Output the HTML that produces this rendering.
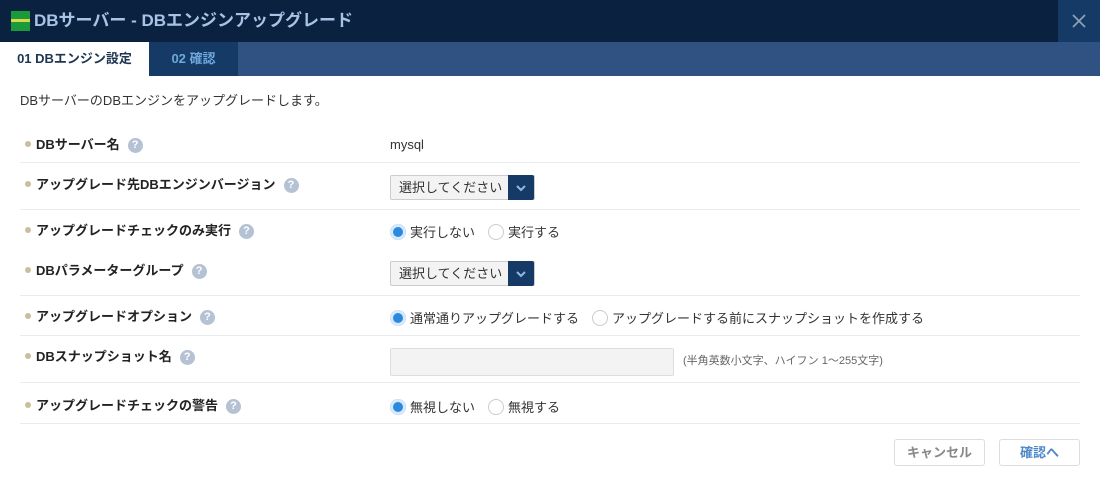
<!DOCTYPE html><html><head><meta charset="utf-8"><style>
body{margin:0;width:1100px;height:485px;background:#fff;font-family:"Liberation Sans","Noto Sans CJK JP",sans-serif;font-size:13px;line-height:1.2;color:#333;position:relative;overflow:hidden}
.a{position:absolute}
.hd{left:0;top:0;width:1100px;height:42px;background:#0a2240}
.ttl{left:34px;top:11px;color:#a9c3e6;font-size:17px;font-weight:bold}
.x{left:1058px;top:0;width:42px;height:42px;background:#163a66}
.tb{left:0;top:42px;width:1100px;height:34px;background:#305283}
.t1{left:0;top:42px;width:149px;height:34px;background:#fff;font-weight:bold;color:#1e3552;line-height:34px;text-align:center}
.t2{left:149px;top:42px;width:89px;height:34px;background:#163a66;font-weight:bold;color:#6fa8dc;line-height:34px;text-align:center}
.ln{left:20px;width:1060px;height:1px;background:#e8ecef}
.lb{left:25px;font-weight:bold;color:#222;margin-top:1px}
.lb:before{content:"";display:inline-block;width:6px;height:6px;border-radius:50%;background:#c9bf9a;margin-right:5px;vertical-align:2px}
.q{display:inline-block;width:15px;height:15px;border-radius:50%;background:#b4c2d4;color:#fff;font-size:11px;text-align:center;line-height:15px;margin-left:8px;vertical-align:1px}
.sel{left:390px;width:145px;height:25px;border:1px solid #ccc;border-radius:2px;background:#f3f3f3;box-sizing:border-box}
.sel span{position:absolute;left:8px;top:4px}
.sel i{position:absolute;right:0;top:-1px;width:26px;height:25px;background:#163a66;border-radius:0 2px 2px 0}
.v{margin-top:1px}
.r{display:inline-block;width:16px;height:16px;border-radius:50%;border:1px solid #ccc;box-sizing:border-box;vertical-align:-3px;margin-right:4px;background:#fff}
.r.on{border:none;background:#2b8ae0;box-shadow:inset 0 0 0 3px #d8e9f8}
.btn{top:439px;height:27px;border:1px solid #ddd;border-radius:3px;box-sizing:border-box;text-align:center;line-height:25px;font-weight:bold}
</style></head><body>
<div class="a hd"></div>
<div class="a" style="left:11px;top:11px;width:19px;height:20px;background:#1a9a3a"></div>
<div class="a" style="left:11px;top:19px;width:19px;height:3px;background:#d8d848"></div>
<div class="a ttl">DBサーバー - DBエンジンアップグレード</div>
<div class="a x"><svg width="42" height="42"><path d="M15 15l12 12M27 15l-12 12" stroke="#8fa3ba" stroke-width="1.6"/></svg></div>
<div class="a tb"></div>
<div class="a t1">01 DBエンジン設定</div>
<div class="a t2">02 確認</div>
<div class="a" style="left:20px;top:93px">DBサーバーのDBエンジンをアップグレードします。</div>

<div class="a lb" style="top:136px">DBサーバー名<span class="q">?</span></div>
<div class="a v" style="left:390px;top:136px">mysql</div>
<div class="a ln" style="top:162px"></div>

<div class="a lb" style="top:176px">アップグレード先DBエンジンバージョン<span class="q">?</span></div>
<div class="a sel" style="top:175px"><span>選択してください</span><i><svg width="26" height="25"><path d="M9 11l4 4 4-4" stroke="#8fb8e8" stroke-width="2" fill="none"/></svg></i></div>
<div class="a ln" style="top:209px"></div>

<div class="a lb" style="top:222px">アップグレードチェックのみ実行<span class="q">?</span></div>
<div class="a v" style="left:390px;top:223px"><span class="r on"></span>実行しない　<span class="r"></span>実行する</div>

<div class="a lb" style="top:262px">DBパラメーターグループ<span class="q">?</span></div>
<div class="a sel" style="top:261px"><span>選択してください</span><i><svg width="26" height="25"><path d="M9 11l4 4 4-4" stroke="#8fb8e8" stroke-width="2" fill="none"/></svg></i></div>
<div class="a ln" style="top:295px"></div>

<div class="a lb" style="top:308px">アップグレードオプション<span class="q">?</span></div>
<div class="a v" style="left:390px;top:309px"><span class="r on"></span>通常通りアップグレードする　<span class="r"></span>アップグレードする前にスナップショットを作成する</div>
<div class="a ln" style="top:335px"></div>

<div class="a lb" style="top:348px">DBスナップショット名<span class="q">?</span></div>
<div class="a" style="left:390px;top:348px;width:284px;height:28px;border:1px solid #ddd;background:#f3f3f3;box-sizing:border-box;border-radius:2px"></div>
<div class="a" style="left:683px;top:355px;font-size:11px;color:#666">(半角英数小文字、ハイフン 1～255文字)</div>
<div class="a ln" style="top:382px"></div>

<div class="a lb" style="top:397px">アップグレードチェックの警告<span class="q">?</span></div>
<div class="a v" style="left:390px;top:398px"><span class="r on"></span>無視しない　<span class="r"></span>無視する</div>
<div class="a ln" style="top:423px"></div>

<div class="a btn" style="left:894px;width:91px;color:#888">キャンセル</div>
<div class="a btn" style="left:999px;width:81px;color:#4a88c8">確認へ</div>
</body></html>
